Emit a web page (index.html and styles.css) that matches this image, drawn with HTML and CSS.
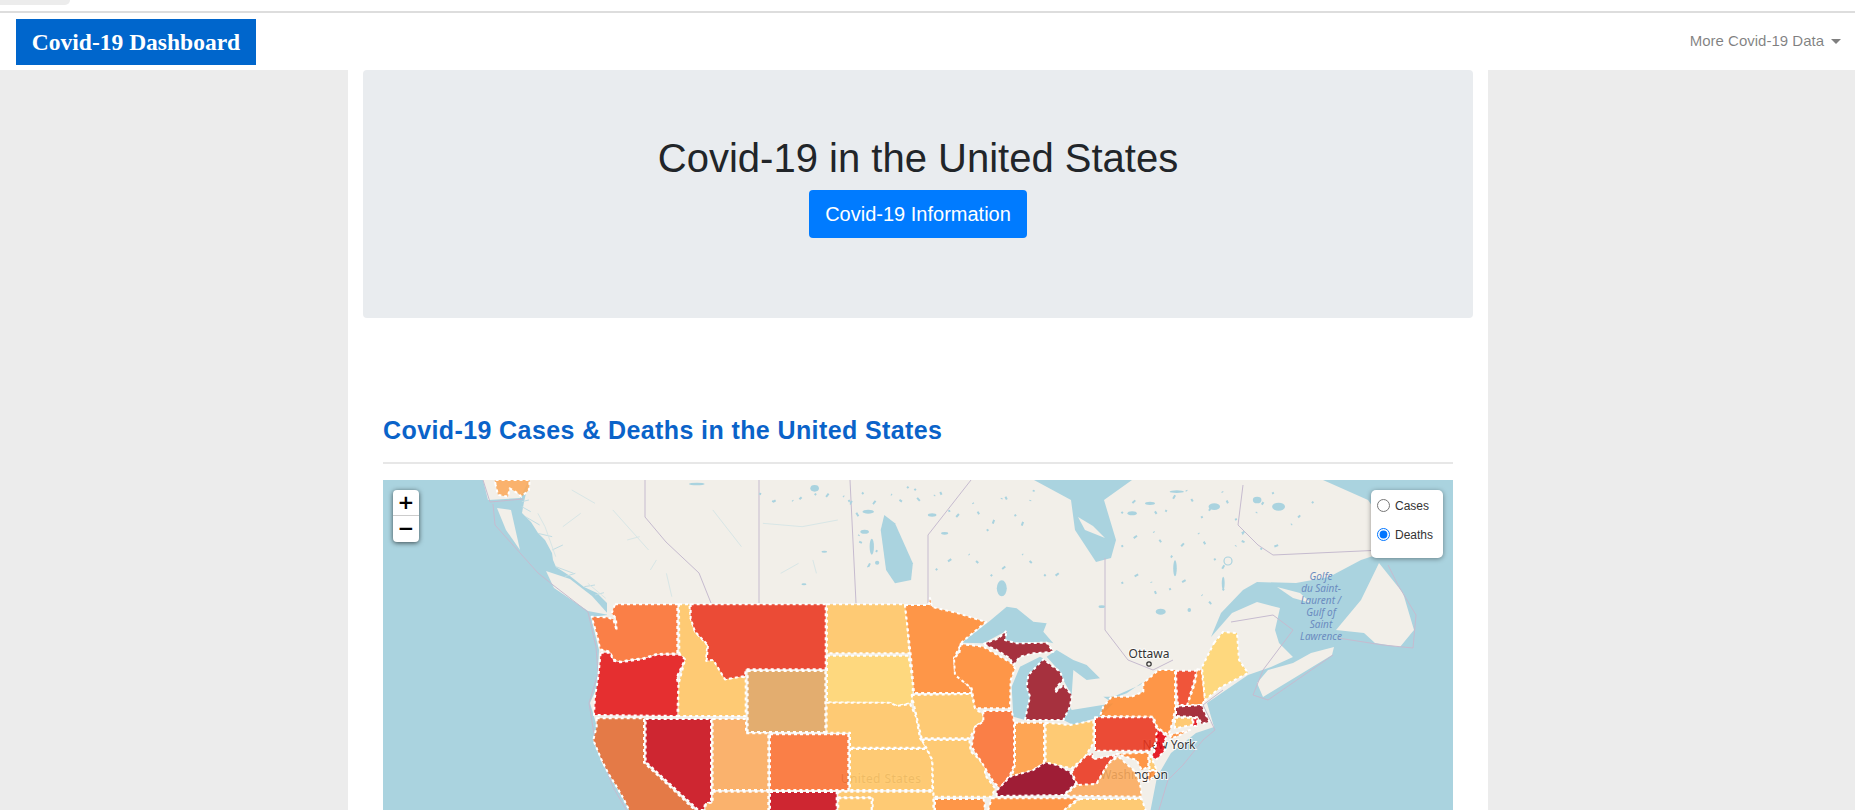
FILE: index.html
```html
<!DOCTYPE html>
<html lang="en">
<head>
<meta charset="utf-8">
<title>Covid-19 Dashboard</title>
<link rel="stylesheet" href="styles.css">
</head>
<body>
<div class="browser-strip"><span class="browser-tab"></span></div>
<nav class="navbar">
  <a class="brand" href="#">Covid-19 Dashboard</a>
  <a class="nav-link" href="#">More Covid-19 Data<span class="caret"></span></a>
</nav>
<div class="page">
<main class="container">
  <section class="jumbotron">
    <h1>Covid-19 in the United States</h1>
    <a class="btn" href="#">Covid-19 Information</a>
  </section>
  <section class="map-section">
    <h2>Covid-19 Cases &amp; Deaths in the United States</h2>
    <div class="map">
      <svg class="map-svg" viewBox="0 0 1070 330" width="1070" height="330" aria-label="Map of Covid-19 deaths by US state">
        <g class="land">
          <path d="M146 0L141 22L139 33L148 42L155 53L162 60L169 73L170 80L173 87L187 96L201 107L214 113L224 123L224 135L208 137L216 170L214 207L207 223L214 247L210 260L219 283L235 310L248 333L767 333L774 297L788 273L813 253L831 247L824 223L865 195L888 187L910 177L896 163L892 150L897 128L874 122L849 133L828 157L838 133L860 110L874 102L913 103L946 97L978 80L999 73L994 33L985 20L940 0L749 0L721 20L733 60L728 78L713 82L692 50L688 20L651 0Z"/>
          <path d="M100 0L105 20L137 18L146 0Z"/>
          <path d="M163 91L187 99L209 116L226 135L205 131L171 108Z"/>
          <path d="M114 28L128 30L137 70L123 50Z"/>
          <path d="M996 83L1020 113L1031 150L1017 167L992 163L981 153L953 150L978 120Z"/>
          <path d="M894 107L917 113L928 123L910 118Z"/>
          <path d="M874 203L880 217L949 175L951 167L928 173L910 183L885 190Z"/>
          <path d="M695 37L710 46L722 58L702 50Z"/>
        </g>
        <g class="borders">
          <path d="M100 0L107 22L140 19"/>
          <path d="M110 24L112 45L155 93L170 105L205 132L213 167L215 193L206 223L212 260L230 307L245 333"/>
          <path d="M262 0L262 37L283 62L316 93L328 123"/>
          <path d="M376 0L376 123"/>
          <path d="M467 0L473 123"/>
          <path d="M588 0L545 55L545 123"/>
          <path d="M722 78L722 150L745 180L770 190L790 180"/>
          <path d="M860 5L855 45L875 65L890 75L1000 70"/>
          <path d="M848 142L890 135L910 150L895 170L880 190L870 215L885 220L950 175"/>
          <path d="M955 158L1000 165L1030 168L1033 135L1015 105L1005 85"/>
          <path d="M840 210L820 225L832 250L820 260L800 285L785 300L775 333"/>
        </g>
        <g class="fjords" transform="translate(-13 -10) scale(.357143 .333333)">
          <path d="M425 110L450 125"/><path d="M435 140L475 165"/><path d="M470 190L510 200"/><path d="M510 240L540 225"/><path d="M520 290L570 310"/><path d="M600 350L630 345"/><path d="M425 95L445 90"/><path d="M545 320L575 310"/><path d="M630 375L655 368"/>
        </g>
        <g class="lakes" transform="translate(-13 -10) scale(.357143 .333333)">
          <ellipse cx="915" cy="42" rx="22" ry="4"/><ellipse cx="1245" cy="55" rx="12" ry="10"/><ellipse cx="1395" cy="125" rx="16" ry="6"/><ellipse cx="1385" cy="185" rx="12" ry="6"/><ellipse cx="1405" cy="230" rx="6" ry="24"/><ellipse cx="1420" cy="278" rx="6" ry="6"/><ellipse cx="1215" cy="343" rx="7" ry="3"/><ellipse cx="1272" cy="245" rx="8" ry="3"/>
          <path d="M1440 135L1470 160L1520 280L1515 330L1470 340L1445 300L1430 180Z"/>
        </g>
        <g class="rivers" transform="translate(-13 -10) scale(.357143 .333333)">
          <path d="M565 60L630 100"/><path d="M520 260L490 170L470 130"/><path d="M540 170L590 130"/><path d="M720 210L755 200"/><path d="M785 300L802 270"/><path d="M1150 310L1200 280"/><path d="M610 340L660 385"/><path d="M830 310L845 380"/><path d="M680 120L780 240"/><path d="M1100 160L1210 170L1310 150"/><path d="M1240 270L1250 310"/><path d="M960 120L1040 230"/>
        </g>
        <g class="lake-dots" transform="translate(-13 -10) scale(.357143 .333333)">
          <path d="M1090 70L1130 95L1165 70L1190 100L1230 60L1270 90L1300 50L1345 100L1370 60L1410 100L1440 60L1490 95L1540 45"/>
          <path d="M1340 90L1385 170L1360 210L1420 240L1395 290L1440 330"/>
        </g>
        <g class="lake-dots" transform="translate(517 -10) scale(.357143 .333333)">
          <path d="M20 50L70 110L110 60L150 150L200 90L250 190L290 70L340 170L375 60"/>
          <path d="M100 300L180 240L260 320L340 250L420 330L480 280"/>
          <path d="M620 130L680 70L730 150L790 40L850 150L900 60L960 190L1040 60L1090 170L1180 70"/>
          <path d="M620 230L700 170L760 260L830 180L900 300L950 210L1020 240L1100 210"/>
          <path d="M620 340L690 300L720 380L800 330L870 400L930 330"/>
        </g>
        <g class="lakes" transform="translate(517 -10) scale(.357143 .333333)">
          <ellipse cx="90" cy="135" rx="12" ry="5"/><ellipse cx="125" cy="190" rx="10" ry="4"/><ellipse cx="285" cy="355" rx="14" ry="24"/><ellipse cx="770" cy="295" rx="5" ry="24"/><ellipse cx="650" cy="130" rx="13" ry="6"/><ellipse cx="700" cy="100" rx="14" ry="5"/><ellipse cx="775" cy="65" rx="20" ry="4"/><ellipse cx="880" cy="110" rx="16" ry="10"/><ellipse cx="1060" cy="110" rx="18" ry="12"/><ellipse cx="1000" cy="90" rx="12" ry="10"/><ellipse cx="730" cy="425" rx="14" ry="9"/><ellipse cx="810" cy="420" rx="5" ry="6"/><ellipse cx="905" cy="340" rx="4" ry="20"/><ellipse cx="565" cy="410" rx="9" ry="4"/>
        </g>
        <circle class="ring" cx="845" cy="81" r="4"/>
        <g class="lakes" transform="translate(517 120) scale(.333333)">
          <path d="M185 128L270 62L320 20L350 25L400 65L440 70L430 95L460 130L440 125L350 128L315 120L320 92L250 130Z"/>
          <path d="M340 350L335 260L360 200L420 170L435 178L385 225L380 260L390 290L375 360Z"/>
          <path d="M440 170L470 150L520 180L560 195L600 235L560 240L520 210L515 285L490 240L480 215Z"/>
          <path d="M490 360L510 320L515 330L640 310L600 350L520 375Z"/>
          <path d="M610 290L640 290L720 255L730 245L680 280L625 300Z"/>
        </g>
        <g class="labels">
          <text class="city" x="766" y="178" text-anchor="middle">Ottawa</text>
          <text class="city" x="786" y="269" text-anchor="middle">New York</text>
          <text class="city" x="751" y="299" text-anchor="middle">Washington</text>
          <text class="country" x="498" y="303" text-anchor="middle">United States</text>
          <text class="gulf" x="938" y="100" text-anchor="middle">Golfe</text>
          <text class="gulf" x="938" y="112" text-anchor="middle">du Saint-</text>
          <text class="gulf" x="938" y="124" text-anchor="middle">Laurent /</text>
          <text class="gulf" x="938" y="136" text-anchor="middle">Gulf of</text>
          <text class="gulf" x="938" y="148" text-anchor="middle">Saint</text>
          <text class="gulf" x="938" y="160" text-anchor="middle">Lawrence</text>
        </g>
        <circle class="capital" cx="766" cy="184" r="2.2"/>
        <g class="states">
          <g transform="scale(.333333)">
            <polygon class="s-tan" points="338,15 335,0 440,0 438,30 415,50 405,40 380,25 375,50 345,45"/>
          </g>
          <g transform="translate(197 110) scale(.333333)">
            <polygon class="s-org" points="105,43 292,43 292,190 230,192 190,205 160,208 120,215 100,208 90,185 60,178 55,150 35,80 80,82 100,88 110,122 108,85 95,70"/>
            <polygon class="s-yel" points="297,43 328,43 332,85 345,125 382,165 378,212 400,208 435,268 475,260 497,262 497,378 295,378 295,285 315,210 298,190"/>
            <polygon class="s-red" points="332,43 737,43 737,238 497,238 495,258 435,268 400,210 380,212 384,165 345,125 332,85"/>
            <polygon class="s-yel" points="741,43 975,43 982,110 988,190 741,190"/>
            <polygon class="s-pale" points="741,197 985,197 993,240 999,290 995,339 951,348 930,339 741,337"/>
            <polygon class="s-wy" points="503,243 736,243 736,426 503,426"/>
            <polygon class="s-crim" points="62,188 90,188 100,212 120,217 190,207 230,194 300,194 315,208 290,262 295,285 292,378 42,375 45,320 55,260"/>
            <polygon class="s-ca" points="50,385 192,385 192,518 350,665 150,665 130,625 110,590 85,550 65,510 40,450 50,410"/>
            <polygon class="s-dark" points="197,387 393,387 393,638 375,640 372,660 355,660 197,515"/>
            <polygon class="s-tan" points="398,387 498,387 498,430 565,430 565,600 398,600"/>
            <polygon class="s-org" points="570,433 805,433 805,600 570,600"/>
            <polygon class="s-tan" points="398,605 565,605 565,665 375,665 378,640 398,638"/>
            <polygon class="s-dark" points="570,606 770,606 770,665 570,665"/>
          </g>
          <g transform="translate(317 200) scale(.333333)">
            <polygon class="s-yel" points="380,68 570,68 590,78 630,72 648,110 660,175 680,203 450,203 450,158 380,158"/>
            <polygon class="s-yel" points="450,207 680,207 697,240 697,330 450,330"/>
            <polygon class="s-yel" points="635,45 815,42 825,85 850,105 850,122 825,140 820,155 808,175 665,175 650,110"/>
            <polygon class="s-yel" points="665,180 808,180 812,215 835,235 855,260 855,285 885,325 875,350 700,350 697,240 680,205"/>
            <polygon class="s-yel" points="415,335 700,335 700,395 518,395 518,352 415,352"/>
            <polygon class="s-yel" points="415,355 515,355 515,395 415,395"/>
          </g>
          <g transform="translate(517 120) scale(.333333)">
            <polygon class="s-amb" points="15,15 87,15 90,-6 96,21 171,39 258,66 186,126 162,174 165,219 210,261 213,279 42,279 33,171"/>
            <polygon class="s-amb" points="182,132 178,160 162,175 165,225 215,265 225,325 330,325 332,240 345,205 335,190 250,140"/>
            <polygon class="s-mar" points="250,132 295,115 320,92 315,120 350,130 440,128 460,155 400,160 360,170 340,195 330,175 290,150"/>
            <polygon class="s-mar" points="375,360 390,290 380,260 385,225 430,178 480,215 490,240 470,260 465,278 490,255 515,285 510,320 490,360"/>
            <polygon class="s-org" points="250,333 335,333 342,365 342,495 330,525 300,565 280,545 250,495 215,440 225,380 250,365"/>
            <polygon class="s-lamb" points="345,368 432,368 432,490 390,515 335,530 345,495"/>
            <polygon class="s-yel" points="437,368 510,375 580,362 580,430 555,470 515,505 470,495 437,487"/>
            <polygon class="s-wine" points="290,588 290,572 330,530 400,510 435,487 470,495 510,515 528,550 490,585"/>
            <polygon class="s-red" points="515,515 555,470 578,460 578,478 620,470 650,465 625,490 590,550 550,560 530,550"/>
            <polygon class="s-red" points="585,352 755,352 770,385 778,405 760,440 750,452 585,452"/>
            <polygon class="s-tan" points="495,587 530,555 590,552 625,490 655,470 700,510 720,550 725,590"/>
            <polygon class="s-yel" points="540,597 725,597 740,640 480,640"/>
            <polygon class="s-amb" points="275,595 535,595 480,640 262,640"/>
            <polygon class="s-amb" points="105,597 250,597 255,612 250,640 105,640"/>
            <polygon class="s-amb" points="650,462 745,458 745,500 725,510 710,480"/>
            <polygon class="s-yel" points="750,465 768,505 768,510 748,510"/>
            <polygon class="s-amb" points="745,514 775,514 745,545"/>
          </g>
          <g transform="translate(717 170) scale(.333333)">
            <polygon class="s-crim2" points="175,238 200,260 190,280 195,300 170,328 155,320 165,300 170,275 168,255"/>
            <polygon class="s-amb" points="175,60 225,60 225,180 215,225 205,255 172,232 160,200 0,198 10,170 35,140 95,140 130,125 130,100"/>
            <polygon class="s-amb" points="210,255 270,240 240,255 215,265"/>
            <polygon class="s-ver" points="228,62 290,62 280,100 262,165 234,165 230,120"/>
            <polygon class="s-amb" points="292,58 305,60 315,150 305,165 262,165 285,100"/>
            <polygon class="s-pale" points="342,-21 369,-54 411,-51 417,30 444,69 363,111 315,150 306,51"/>
            <polygon class="s-mar" points="228,170 305,165 315,190 328,215 305,222 295,202 228,198"/>
            <polygon class="s-yel" points="225,203 277,203 277,225 225,235"/>
            <polygon class="s-crim2" points="280,205 293,205 290,228 280,228"/>
          </g>
        </g>
      </svg>
      <div class="zoom-control">
        <a class="zoom-btn" href="#">+</a>
        <a class="zoom-btn" href="#">−</a>
      </div>
      <form class="legend">
        <label class="legend-item"><input type="radio" name="layer">Cases</label>
        <label class="legend-item"><input type="radio" name="layer" checked>Deaths</label>
      </form>
    </div>
  </section>
</main>
</div>
</body>
</html>
```

FILE: styles.css
```css
* { box-sizing: border-box; }
html, body { margin: 0; height: 810px; overflow: hidden; }
body {
  background: #ececec;
  font-family: "Liberation Sans", Arial, sans-serif;
  color: #212529;
}
a { text-decoration: none; }

.browser-strip {
  height: 13px;
  background: #fff;
  border-bottom: 2px solid #ddd;
}
.browser-tab {
  display: block;
  width: 70px;
  height: 5px;
  background: #ececec;
  border-bottom-right-radius: 14px;
}

.navbar {
  height: 57px;
  background: #fff;
  display: flex;
  align-items: flex-start;
  justify-content: space-between;
  padding: 6px 14px 0 16px;
}
.brand {
  width: 240px;
  height: 46px;
  background: #0066cc;
  color: #fff;
  font-family: "Liberation Serif", "DejaVu Serif", serif;
  font-weight: 700;
  font-size: 23.5px;
  display: flex;
  align-items: center;
  justify-content: center;
}
.nav-link {
  color: rgba(0, 0, 0, .5);
  font-size: 15px;
  line-height: 44px;
  display: flex;
  align-items: center;
}
.caret {
  margin-left: 7px;
  border-top: 5px solid rgba(0, 0, 0, .5);
  border-left: 5px solid transparent;
  border-right: 5px solid transparent;
}

.page {
  display: flex;
  justify-content: center;
  padding-right: 19px;
}
.container {
  width: 1140px;
  height: 740px;
  background: #fff;
  padding: 0 15px;
}
.jumbotron {
  height: 248px;
  background: #e9ecef;
  border-radius: 4px;
  padding-top: 64px;
  text-align: center;
}
.jumbotron h1 {
  margin: 0 0 8px;
  font-size: 40px;
  font-weight: 400;
  line-height: 48px;
}
.btn {
  display: inline-block;
  height: 48px;
  padding: 0 16px;
  background: #007bff;
  border-radius: 4px;
  color: #fff;
  font-size: 20px;
  line-height: 48px;
}

.map-section { padding: 98px 20px 0; }
.map-section h2 {
  margin: 0 0 16px;
  height: 48px;
  border-bottom: 2px solid #e7e7e7;
  color: #0a63c9;
  font-size: 25px;
  font-weight: 700;
  letter-spacing: .4px;
  line-height: 29px;
}

.map {
  position: relative;
  height: 330px;
  background: #aad3df;
  overflow: hidden;
}
.map-svg { display: block; }
.land { fill: #f2efe9; }
.lakes { fill: #aad3df; }
.fjords path { fill: none; stroke: #c2dde3; stroke-width: 1; vector-effect: non-scaling-stroke; }
.rivers path { fill: none; stroke: #d8e6e6; stroke-width: 1; vector-effect: non-scaling-stroke; }
.lake-dots path {
  fill: none;
  stroke: #aad3df;
  stroke-width: 2;
  stroke-dasharray: 2 13 4 22 1 9 3 17;
  vector-effect: non-scaling-stroke;
}
.borders path { fill: none; stroke: #c6bbcf; stroke-width: 1; }
.ring { fill: none; stroke: #aad3df; stroke-width: 1.2; }
.capital { fill: #f2efe9; stroke: #333; stroke-width: 1.2; }

.labels text { font-family: "Noto Sans", sans-serif; }
.city, .country {
  font-size: 12px;
  fill: #333;
  paint-order: stroke;
  stroke: rgba(255, 255, 255, .8);
  stroke-width: 2px;
}
.country { letter-spacing: .4px; fill: #777; }
.gulf {
  font-size: 10px;
  font-style: italic;
  fill: #6a8cbf;
}

.states polygon {
  fill-opacity: .88;
  stroke: #fff;
  stroke-width: 2;
  stroke-dasharray: 3;
  stroke-linejoin: round;
  vector-effect: non-scaling-stroke;
}
.s-yel { fill: #ffc563; }
.s-pale { fill: #ffd56e; }
.s-org { fill: #fa7030; }
.s-red { fill: #e9341c; }
.s-wy { fill: #e0a45d; }
.s-crim { fill: #e31516; }
.s-ca { fill: #e16a30; }
.s-dark { fill: #c80a17; }
.s-tan { fill: #faaa5b; }
.s-amb { fill: #ff8a31; }
.s-lamb { fill: #ff9b3f; }
.s-mar { fill: #9b1726; }
.s-wine { fill: #93001c; }
.s-crim2 { fill: #e2020e; }
.s-ver { fill: #ef4021; }

.zoom-control {
  position: absolute;
  top: 10px;
  left: 10px;
  width: 26px;
  border-radius: 4px;
  background: #fff;
  box-shadow: 0 1px 5px rgba(0, 0, 0, .65);
}
.zoom-btn {
  display: block;
  height: 26px;
  color: #000;
  font-family: "DejaVu Sans", sans-serif;
  font-size: 20px;
  font-weight: 700;
  line-height: 24px;
  text-align: center;
}
.zoom-btn:first-child { border-bottom: 1px solid #ccc; }

.legend {
  position: absolute;
  top: 10px;
  right: 10px;
  width: 72px;
  height: 68px;
  padding: 3px 0 0 5px;
  background: #fff;
  border-radius: 5px;
  box-shadow: 0 1px 5px rgba(0, 0, 0, .4);
  display: flex;
  flex-direction: column;
  gap: 4px;
}
.legend-item {
  display: flex;
  align-items: center;
  height: 25px;
  color: #333;
  font-size: 12px;
}
.legend-item input {
  width: 13px;
  height: 13px;
  margin: 0 5px 0 1px;
  accent-color: #0075ff;
}
```
